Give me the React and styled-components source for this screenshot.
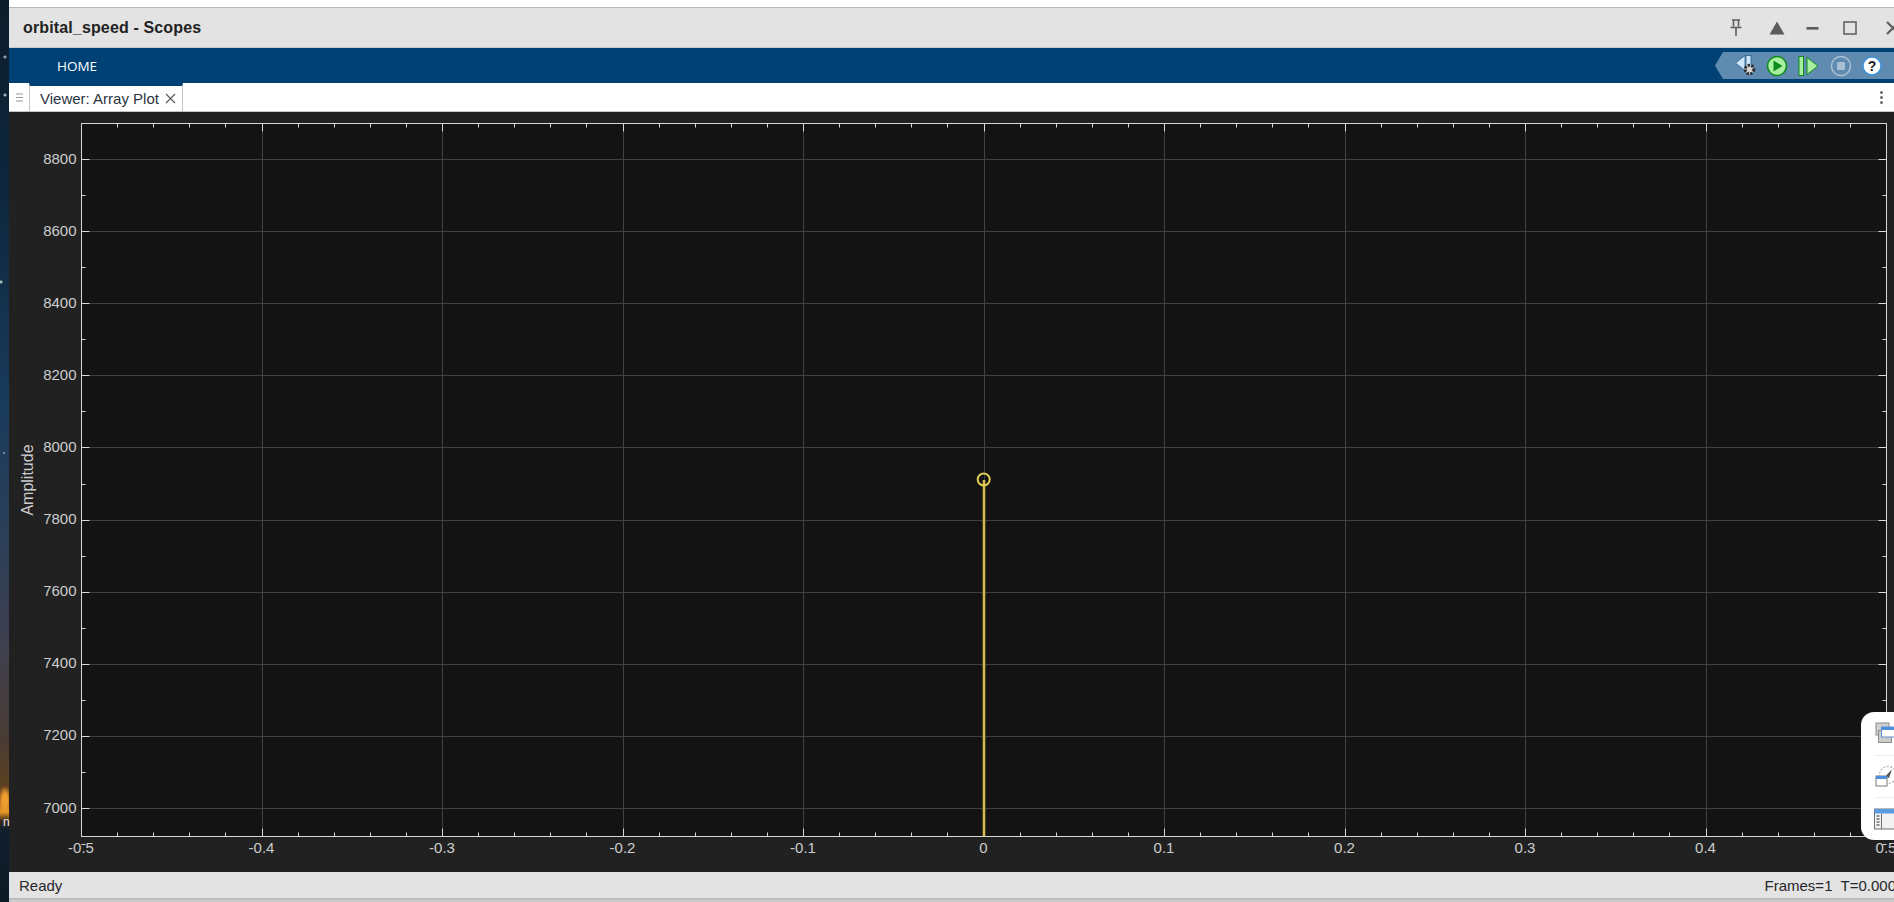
import React from 'react';
import styled, { createGlobalStyle } from 'styled-components';

const GlobalStyle = createGlobalStyle`
  html, body {
    margin: 0;
    padding: 0;
    height: 100%;
    overflow: hidden;
    background: #ffffff;
  }
  #root {
    height: 100%;
  }
`;

const Page = styled.div`
  display: flex;
  position: relative;
  width: 1894px;
  height: 902px;
  overflow: hidden;
  font-family: 'Liberation Sans', Arial, sans-serif;
`;

const Wallpaper = styled.div`
  position: relative;
  flex: 0 0 9px;
  background:
    radial-gradient(circle at 5px 57px, #8fa0a8 0 1px, transparent 2px),
    radial-gradient(circle at 5px 95px, #9fb0b8 0 1px, transparent 2px),
    radial-gradient(circle at 1px 282px, #a8b8c0 0 1px, transparent 2px),
    radial-gradient(circle at 4px 453px, #6f8898 0 1px, transparent 1.5px),
    radial-gradient(ellipse 6px 14px at 5px 800px, #f0a030 0 40%, transparent 100%),
    linear-gradient(180deg, #0c1c2b 0, #0f2a42 25%, #1a3b5c 45%, #2c3f58 60%, #40404f 72%, #4a3c34 82%, #5a4020 87%, #b86a1a 89%, #e89a28 90%, #3a2a18 91%, #0f1f2b 92%, #0c1a26 100%);
`;

const DesktopLabel = styled.span`
  position: absolute;
  left: 3px;
  top: 815px;
  font-size: 12px;
  color: #e8e8e8;
`;

const Main = styled.div`
  flex: 1;
  min-width: 0;
  display: flex;
  flex-direction: column;
`;

const TopStrip = styled.div`
  flex: 0 0 7px;
  background: #ffffff;
  border-bottom: 1px solid #b8b8b8;
`;

const TitleBar = styled.div`
  flex: 0 0 40px;
  display: flex;
  align-items: center;
  justify-content: space-between;
  box-sizing: border-box;
  padding-left: 14px;
  background: #e3e3e3;
  border-bottom: 1px solid #c6cbd0;
`;

const Title = styled.div`
  font-size: 16px;
  font-weight: 700;
  letter-spacing: 0.14px;
  color: #222222;
`;

const WindowControls = styled.div`
  display: flex;
  align-items: center;
  gap: 21px;
  margin-right: -7px;
  padding-top: 1px;
`;

const Ribbon = styled.div`
  flex: 0 0 35px;
  display: flex;
  align-items: center;
  justify-content: space-between;
  background: #004175;
`;

const RibbonTab = styled.div`
  margin-left: 48px;
  font-family: 'Open Sans', sans-serif;
  font-size: 13.5px;
  color: #ffffff;
`;

const QuickAccess = styled.div`
  display: flex;
  align-items: center;
  width: 179px;
  height: 27px;
  box-sizing: border-box;
  padding-left: 20px;
  gap: 9px;
  background: #5f8bb0;
  clip-path: polygon(0 50%, 8px 0, 100% 0, 100% 100%, 8px 100%);
`;

const TabRow = styled.div`
  flex: 0 0 29px;
  display: flex;
  align-items: stretch;
  justify-content: space-between;
  box-sizing: border-box;
  background: #ffffff;
  border-bottom: 1px solid #c4c4c4;
`;

const TabGroup = styled.div`
  display: flex;
`;

const Grip = styled.div`
  flex: 0 0 20px;
  display: flex;
  align-items: center;
  justify-content: center;
`;

const Tab = styled.div`
  display: flex;
  align-items: center;
  gap: 6px;
  width: 154px;
  box-sizing: border-box;
  padding: 0 5px 0 10px;
  border-top: 3px solid #004175;
  border-left: 1px solid #c4c4c4;
  border-right: 1px solid #c4c4c4;
  font-size: 15px;
  color: #2a3440;
  white-space: nowrap;
`;

const Kebab = styled.div`
  display: flex;
  flex-direction: column;
  justify-content: center;
  gap: 2px;
  margin-right: 11px;
`;

const KebabDot = styled.span`
  width: 3px;
  height: 3px;
  border-radius: 50%;
  background: #6a6a6a;
`;

const PlotArea = styled.div`
  flex: 1;
  min-height: 0;
  background: #212121;
`;

const PlotSvg = styled.svg`
  display: block;
  width: 100%;
  height: 100%;
  font-family: 'Liberation Sans', Arial, sans-serif;
`;

const StatusBar = styled.div`
  flex: 0 0 26px;
  display: flex;
  align-items: center;
  justify-content: space-between;
  padding-left: 10px;
  background: #e3e3e3;
  font-size: 15px;
  color: #26282c;
`;

const StatusRight = styled.div`
  white-space: pre;
  margin-right: -2px;
`;

const BottomShadow = styled.div`
  flex: 0 0 4px;
  background: linear-gradient(180deg, #b4b4b4, #d4d4d4);
`;

const FloatPanel = styled.div`
  position: absolute;
  left: 1861px;
  top: 712px;
  width: 60px;
  height: 128px;
  display: flex;
  flex-direction: column;
  background: #ffffff;
  border-radius: 13px;
`;

const FloatItem = styled.div`
  position: relative;
  flex: 1;
  display: flex;
  align-items: center;
  padding-left: 14px;
  & + &::before {
    content: '';
    position: absolute;
    left: 14px;
    right: 0;
    top: 0;
    height: 1px;
    background: #efefef;
  }
`;

const xMajor = [-0.5, -0.4, -0.3, -0.2, -0.1, 0, 0.1, 0.2, 0.3, 0.4, 0.5];
const yMajor = [7000, 7200, 7400, 7600, 7800, 8000, 8200, 8400, 8600, 8800];

const LEFT = 81.5;
const RIGHT = 1886.5;
const TOP = 123.5;
const BOTTOM = 836.5;

const xPos = v => LEFT + ((v + 0.5) * (RIGHT - LEFT));
const yPos = v => 808.5 - ((v - 7000) / 200) * 72.11;
const snap = p => Math.floor(p) + 0.5;

const formatX = v => (v === 0 ? '0' : String(v));

const ScopePlot = () => {
  const xMinor = [];
  for (let i = 0; i <= 50; i += 1) {
    if (i % 5 !== 0) xMinor.push(LEFT + (i * (RIGHT - LEFT)) / 50);
  }
  const yMinor = [];
  for (let v = 6900; v <= 8900; v += 200) yMinor.push(yPos(v));

  return (
    <PlotSvg viewBox="9 112 1885 760">
      <rect x={LEFT} y={TOP} width={RIGHT - LEFT} height={BOTTOM - TOP} fill="#131313" />
      {xMajor.slice(1, -1).map(v => (
        <line key={v} x1={snap(xPos(v))} x2={snap(xPos(v))} y1={TOP} y2={BOTTOM} stroke="#414141" />
      ))}
      {yMajor.map(v => (
        <line key={v} x1={LEFT} x2={RIGHT} y1={snap(yPos(v))} y2={snap(yPos(v))} stroke="#414141" />
      ))}
      <g stroke="#d8d8d8">
        {xMinor.map(x => (
          <g key={x}>
            <line x1={snap(x)} x2={snap(x)} y1={TOP} y2={TOP + 4} />
            <line x1={snap(x)} x2={snap(x)} y1={BOTTOM} y2={BOTTOM - 4} />
          </g>
        ))}
        {xMajor.map(v => (
          <g key={v}>
            <line x1={snap(xPos(v))} x2={snap(xPos(v))} y1={TOP} y2={TOP + 8} />
            <line x1={snap(xPos(v))} x2={snap(xPos(v))} y1={BOTTOM} y2={BOTTOM - 8} />
          </g>
        ))}
        {yMinor.map(y => (
          <g key={y}>
            <line x1={LEFT} x2={LEFT + 4} y1={snap(y)} y2={snap(y)} />
            <line x1={RIGHT} x2={RIGHT - 4} y1={snap(y)} y2={snap(y)} />
          </g>
        ))}
        {yMajor.map(v => (
          <g key={v}>
            <line x1={LEFT} x2={LEFT + 8} y1={snap(yPos(v))} y2={snap(yPos(v))} />
            <line x1={RIGHT} x2={RIGHT - 8} y1={snap(yPos(v))} y2={snap(yPos(v))} />
          </g>
        ))}
        <rect x={LEFT} y={TOP} width={RIGHT - LEFT} height={BOTTOM - TOP} fill="none" />
      </g>

      <line x1="984" x2="984" y1="480" y2={BOTTOM} stroke="#d2bb4c" strokeWidth="2.6" />
      <circle cx="983.7" cy="479.5" r="6" fill="none" stroke="#e3cf52" strokeWidth="2" />

      <g fill="#cdcdcd" fontSize="15">
        {yMajor.map(v => (
          <text key={v} x="76.5" y={yPos(v) + 4} textAnchor="end">{v}</text>
        ))}
        {xMajor.map(v => (
          <text key={v} x={xPos(v) - 0.5} y="853" textAnchor="middle">{formatX(v)}</text>
        ))}
        <text transform="translate(33 480) rotate(-90)" textAnchor="middle" fontSize="16">Amplitude</text>
      </g>
    </PlotSvg>
  );
};

const WindowIcons = () => (
  <WindowControls>
    <svg width="14" height="18" viewBox="0 0 14 18">
      <path d="M3 1h8M4.5 1v6.5M9.5 1v6.5M1.5 8.5h11M7 8.5V17" stroke="#5c5c5c" strokeWidth="1.6" fill="none" />
    </svg>
    <svg width="16" height="14" viewBox="0 0 16 14" style={{ marginLeft: 5 }}>
      <path d="M8 0.5L15.5 13.5H0.5Z" fill="#5c5c5c" />
    </svg>
    <svg width="14" height="14" viewBox="0 0 14 14">
      <rect x="0.5" y="6" width="12" height="2.6" fill="#5c5c5c" />
    </svg>
    <svg width="14" height="14" viewBox="0 0 14 14" style={{ marginLeft: 2 }}>
      <rect x="1" y="1" width="12" height="12" fill="none" stroke="#5c5c5c" strokeWidth="1.5" />
    </svg>
    <svg width="16" height="14" viewBox="0 0 16 14" style={{ marginLeft: 7 }}>
      <path d="M2 1l12 12M14 1L2 13" stroke="#5c5c5c" strokeWidth="2.2" fill="none" />
    </svg>
  </WindowControls>
);

const ToolbarIcons = () => (
  <QuickAccess>
    <svg width="22" height="24" viewBox="0 0 22 24">
      <path d="M0.5 9L10 1.5v15z" fill="#cfe6fa" stroke="#2f5f90" strokeWidth="0.8" />
      <rect x="11" y="1.5" width="5" height="11" fill="#cfe6fa" stroke="#2f5f90" strokeWidth="0.8" />
      <circle cx="14.5" cy="15.5" r="4.3" fill="#c8c8c8" stroke="#2e2e2e" strokeWidth="3" strokeDasharray="2.2 1.4" />
      <circle cx="14.5" cy="15.5" r="2.6" fill="#d4d4d4" />
    </svg>
    <svg width="22" height="22" viewBox="0 0 22 22">
      <circle cx="11" cy="11" r="9.5" fill="#a8f0a0" stroke="#0d8a1c" strokeWidth="1.6" />
      <path d="M7.5 5.5L16.5 11L7.5 16.5Z" fill="#0d8a1c" />
    </svg>
    <svg width="22" height="22" viewBox="0 0 22 22" style={{ marginLeft: 1 }}>
      <rect x="1" y="1.5" width="4.5" height="19" fill="#a8f0a0" stroke="#0d8a1c" strokeWidth="1" />
      <path d="M9 2.5L20 11L9 19.5Z" fill="#a8f0a0" stroke="#0d8a1c" strokeWidth="1" />
    </svg>
    <svg width="22" height="22" viewBox="0 0 22 22" style={{ marginLeft: 1 }}>
      <circle cx="11" cy="11" r="9.5" fill="none" stroke="#a9c0d4" strokeWidth="1.5" />
      <rect x="7" y="7" width="8" height="8" rx="1" fill="#a9c0d4" />
    </svg>
    <svg width="20" height="20" viewBox="0 0 20 20" style={{ marginLeft: 1 }}>
      <circle cx="10" cy="10" r="9" fill="#ffffff" stroke="#3f93dc" strokeWidth="1.4" />
      <text x="10" y="15" textAnchor="middle" fontSize="14" fontWeight="700" fontFamily="Liberation Sans" fill="#1c1c1c">?</text>
    </svg>
  </QuickAccess>
);

const FloatingIcons = () => (
  <FloatPanel>
    <FloatItem>
      <svg width="22" height="22" viewBox="0 0 22 22">
        <rect x="1" y="1" width="13" height="12" fill="#d0d0d0" stroke="#8c8c8c" />
        <rect x="3.5" y="8.5" width="13" height="12" fill="#cccccc" stroke="#8c8c8c" />
        <rect x="6.5" y="5" width="15" height="10" fill="#ffffff" stroke="#5a8fd0" />
        <rect x="6.5" y="5" width="15" height="3" fill="#4d8fdc" />
      </svg>
    </FloatItem>
    <FloatItem>
      <svg width="22" height="22" viewBox="0 0 22 22">
        <circle cx="13" cy="10" r="8.5" fill="none" stroke="#b8b8b8" strokeWidth="1.4" strokeDasharray="2 1.5" />
        <path d="M10 11.5L17 4.5L14 13z" fill="#555555" />
        <rect x="1" y="11" width="11" height="10" fill="#ffffff" stroke="#7a7a7a" />
        <rect x="1" y="11" width="11" height="3" fill="#4d8fdc" />
      </svg>
    </FloatItem>
    <FloatItem>
      <svg width="22" height="22" viewBox="0 0 22 22" style={{ marginLeft: -1 }}>
        <rect x="0.5" y="1" width="21" height="20" fill="#f2f2f2" stroke="#707070" />
        <rect x="0.5" y="1" width="21" height="4.5" fill="#5b9be0" />
        <path d="M7.5 5.5V21" stroke="#707070" />
        <path d="M2.5 8h3M2.5 11h3M2.5 14h3M2.5 17h3" stroke="#707070" strokeWidth="1.4" />
      </svg>
    </FloatItem>
  </FloatPanel>
);

export default function App() {
  return (
    <>
      <GlobalStyle />
      <Page>
        <Wallpaper>
          <DesktopLabel>n</DesktopLabel>
        </Wallpaper>
        <Main>
          <TopStrip />
          <TitleBar>
            <Title>orbital_speed - Scopes</Title>
            <WindowIcons />
          </TitleBar>
          <Ribbon>
            <RibbonTab>HOME</RibbonTab>
            <ToolbarIcons />
          </Ribbon>
          <TabRow>
            <TabGroup>
              <Grip>
                <svg width="7" height="9" viewBox="0 0 7 9">
                  <path d="M0 1h7M0 4.5h7M0 8h7" stroke="#9a9a9a" strokeWidth="1.2" />
                </svg>
              </Grip>
              <Tab>
                Viewer: Array Plot
                <svg width="11" height="11" viewBox="0 0 11 11">
                  <path d="M1 1l9 9M10 1L1 10" stroke="#555555" strokeWidth="1.1" fill="none" />
                </svg>
              </Tab>
            </TabGroup>
            <Kebab>
              <KebabDot />
              <KebabDot />
              <KebabDot />
            </Kebab>
          </TabRow>
          <PlotArea>
            <ScopePlot />
          </PlotArea>
          <StatusBar>
            <span>Ready</span>
            <StatusRight>Frames=1  T=0.000</StatusRight>
          </StatusBar>
          <BottomShadow />
        </Main>
        <FloatingIcons />
      </Page>
    </>
  );
}
